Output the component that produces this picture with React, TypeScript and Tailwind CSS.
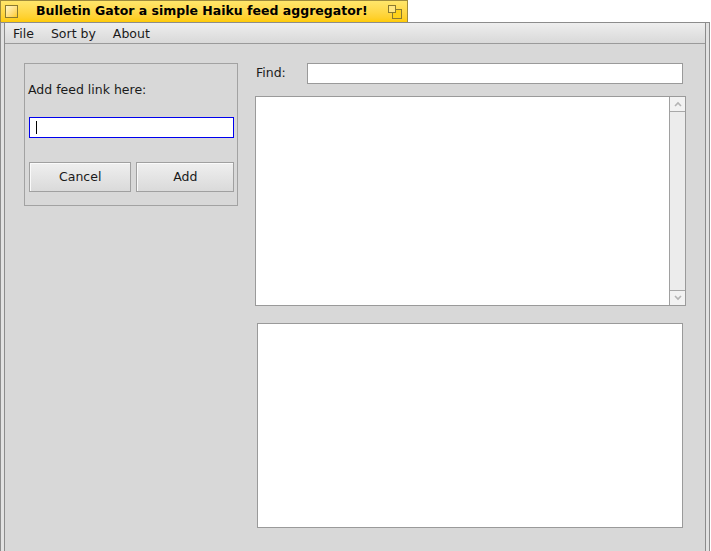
import React from 'react';

// Haiku-style window: yellow tab, menu bar, feed form on the left, find + lists on the right
export default function App() {
  return (
    <div className="w-[711px] h-[551px] overflow-hidden bg-white font-['DejaVu_Sans',sans-serif] text-[12.5px] text-black">
      {/* Window tab */}
      <div className="relative flex h-[22px] w-[408px] items-center border border-b-0 border-[#a08c3c] bg-gradient-to-b from-[#ffe66a] to-[#ffcb00]">
        <div className="ml-[4px] h-[13px] w-[13px] border border-[#8a7a30] bg-gradient-to-br from-[#fff6c8] to-[#ffcb00]" />
        <span className="ml-[18px] font-bold leading-none">
          Bulletin Gator a simple Haiku feed aggregator!
        </span>
        <svg className="absolute right-[5px] top-[4px]" width="14" height="14" viewBox="0 0 14 14">
          <rect x="4.5" y="4.5" width="9" height="9" fill="#ffd21a" stroke="#8a7a30" />
          <rect x="0.5" y="0.5" width="7" height="7" fill="#ffe680" stroke="#8a7a30" />
        </svg>
      </div>

      {/* Window frame */}
      <div className="flex h-[529px] w-[710px] flex-col border border-b-0 border-[#8c8c8c] bg-[#e2e2e2] px-[3px]">
        <div className="flex flex-1 flex-col border-x border-[#8c8c8c] bg-[#d8d8d8]">
          {/* Menu bar */}
          <div className="flex h-[21px] items-center border-b border-[#9a9a9a] bg-gradient-to-b from-[#eeeeee] to-[#d9d9d9] pt-[3px] text-[#1a1a1a]">
            <span className="pl-[8px] pr-[9px]">File</span>
            <span className="pl-[8px] pr-[9px]">Sort by</span>
            <span className="pl-[8px] pr-[9px]">About</span>
          </div>

          {/* Content */}
          <div className="flex pl-[19px] pt-[19px]">
            {/* Add feed panel */}
            <div className="flex h-[143px] w-[214px] flex-col border border-[#a2a2a2] pl-[3px] pr-[3px]">
              <div className="mt-[18px] h-[16px] leading-[16px] text-[#1a1a1a]">Add feed link here:</div>
              <div className="ml-[1px] mt-[19px] flex h-[21px] w-[205px] items-center border border-[#0000ee] bg-white">
                <div className="ml-[6px] h-[13px] w-px bg-black" />
              </div>
              <div className="ml-[1px] mt-[24px] flex gap-[5px]">
                <button className="h-[30px] w-[103px] border border-[#a0a0a0] bg-gradient-to-b from-[#efefef] to-[#dadada] text-[#1a1a1a] shadow-[inset_1px_1px_0_#fafafa]">
                  Cancel
                </button>
                <button className="h-[30px] w-[98px] border border-[#a0a0a0] bg-gradient-to-b from-[#efefef] to-[#dadada] text-[#1a1a1a] shadow-[inset_1px_1px_0_#fafafa]">
                  Add
                </button>
              </div>
            </div>

            {/* Right column */}
            <div className="ml-[17px] flex w-[431px] flex-col">
              <div className="flex h-[21px] items-center">
                <span className="ml-[1px] w-[51px] text-[#1a1a1a]">Find:</span>
                <div className="h-[21px] w-[376px] border border-[#9a9a9a] bg-white" />
              </div>

              {/* Feed list with scroll bar */}
              <div className="mt-[12px] flex h-[210px] w-[431px] border border-[#9a9a9a] bg-white">
                <div className="flex-1" />
                <div className="flex w-[16px] flex-col border-l border-[#a0a0a0] bg-[#ececec]">
                  <div className="flex h-[15px] items-center justify-center border-b border-[#a8a8a8] bg-[#f2f2f2]">
                    <svg width="8" height="6" viewBox="0 0 8 6">
                      <path d="M1 5 L4 2 L7 5" fill="none" stroke="#b4b4b4" strokeWidth="1.6" />
                    </svg>
                  </div>
                  <div className="flex-1" />
                  <div className="flex h-[15px] items-center justify-center border-t border-[#a8a8a8] bg-[#f2f2f2]">
                    <svg width="8" height="6" viewBox="0 0 8 6">
                      <path d="M1 1 L4 4 L7 1" fill="none" stroke="#b4b4b4" strokeWidth="1.6" />
                    </svg>
                  </div>
                </div>
              </div>

              {/* Article view */}
              <div className="ml-[2px] mt-[17px] h-[205px] w-[426px] border border-[#9a9a9a] bg-white p-px">
                <div className="h-full w-full border border-white" />
              </div>
            </div>
          </div>
        </div>
      </div>
    </div>
  );
}
